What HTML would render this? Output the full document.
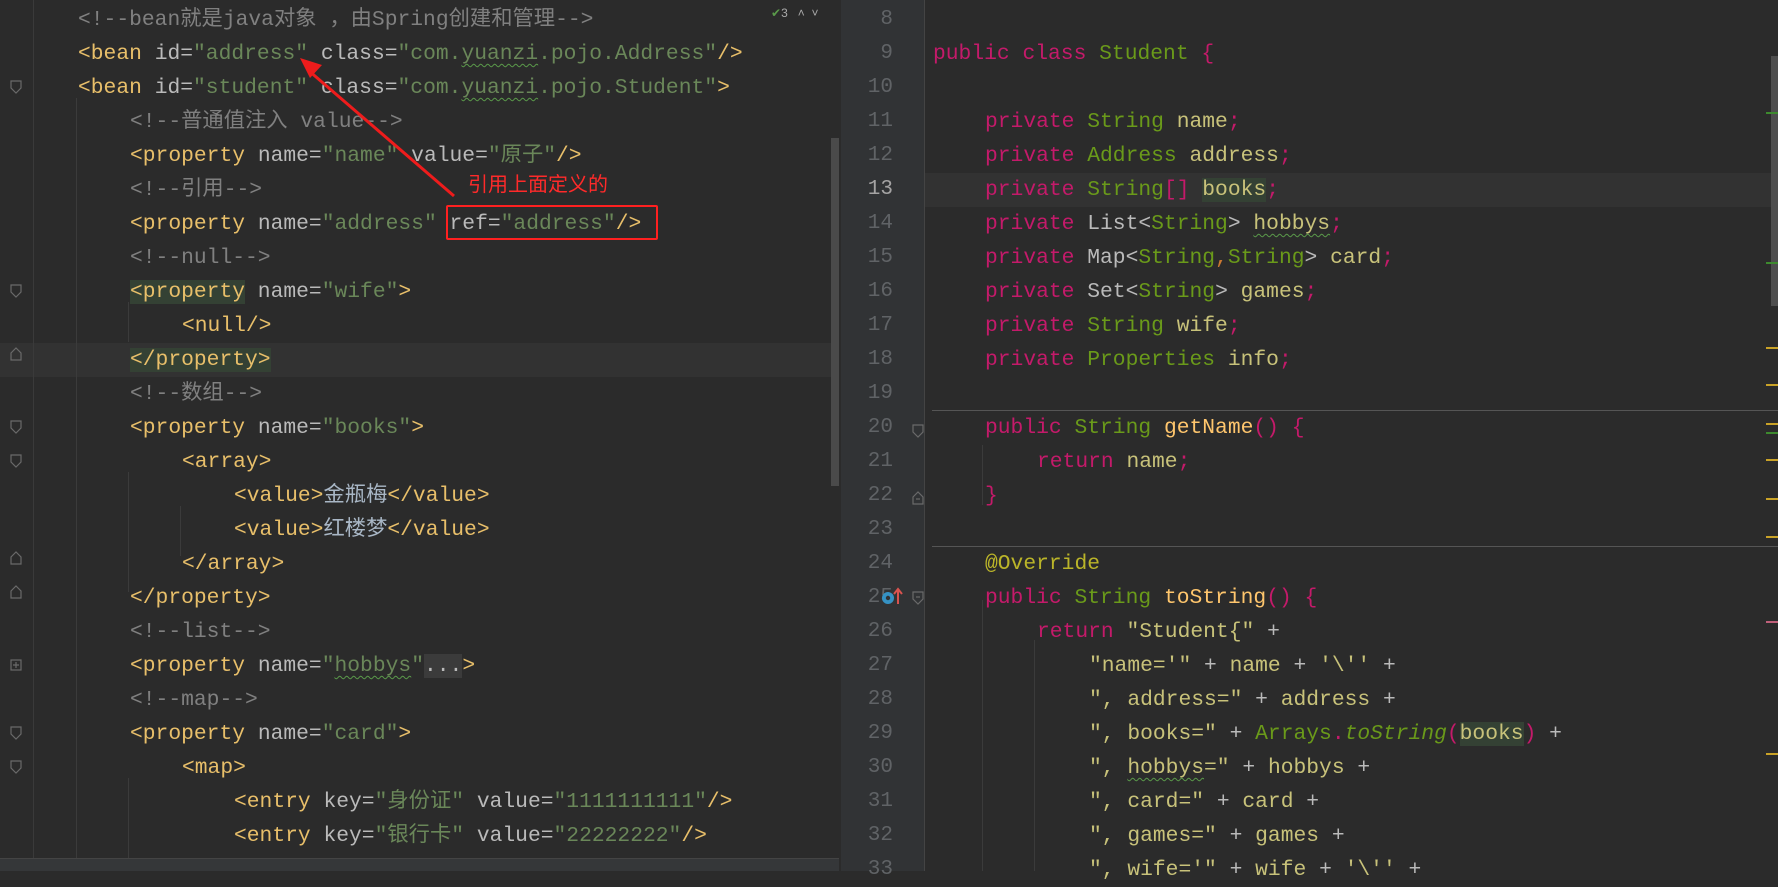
<!DOCTYPE html>
<html><head><meta charset="utf-8"><style>
*{margin:0;padding:0;box-sizing:border-box}
body{width:1778px;height:871px;background:#2b2b2b;position:relative;overflow:hidden;font-family:"Liberation Mono","Noto Sans CJK SC",monospace;font-size:21.3px}
.r{position:absolute;height:34px;line-height:34px;white-space:pre}
.t{color:#e8bf6a}.a{color:#bababa}.v{color:#6a8759}.c{color:#808080}.x{color:#a9b7c6}
.k{color:#c41a6a}.g{color:#6a9a1a}.i{color:#c8c27a}.m{color:#ffc66d}.s{color:#c8c27a}.an{color:#bbb529}
.ln{position:absolute;left:841px;width:52px;text-align:right;color:#606366;height:34px;line-height:34px;font-size:21px}
.hl{position:absolute;height:34px;background:#323232}
.sq{text-decoration:underline wavy #5a9a4a;text-decoration-thickness:1px;text-underline-offset:4px}
.gd{position:absolute;width:1px;background:#3b3b3b}
.mk{position:absolute;left:1766px;width:12px;height:2px}
</style></head><body>
<div class="hl" style="left:0;top:343px;width:831px"></div>
<div style="position:absolute;left:33px;top:0;width:1px;height:860px;background:#3a3a3a"></div>
<div class="gd" style="left:76px;top:98px;height:762px"></div>
<div class="gd" style="left:128px;top:302px;height:40px"></div>
<div class="gd" style="left:128px;top:472px;height:120px"></div>
<div class="gd" style="left:128px;top:778px;height:82px"></div>
<div class="gd" style="left:180px;top:506px;height:50px"></div>
<svg style="position:absolute;left:0;top:0" width="34" height="860">
<g fill="none" stroke="#6a6a6a" stroke-width="1.2">
<path d="M11 81h10v7l-5 5l-5-5z"/><path d="M11 285h10v7l-5 5l-5-5z"/><path d="M11 353l5-5l5 5v7h-10z"/>
<path d="M11 421h10v7l-5 5l-5-5z"/><path d="M11 455h10v7l-5 5l-5-5z"/>
<path d="M11 557l5-5l5 5v7h-10z"/><path d="M11 591l5-5l5 5v7h-10z"/>
<rect x="11" y="660" width="10" height="10"/><path d="M16 662v6M13 665h6"/>
<path d="M11 727h10v7l-5 5l-5-5z"/><path d="M11 761h10v7l-5 5l-5-5z"/>
</g></svg>
<div class="r" style="left:78px;top:3px"><span class="c">&lt;!--bean就是java对象 ，由Spring创建和管理--&gt;</span></div>
<div class="r" style="left:78px;top:37px"><span class="t">&lt;bean </span><span class="a">id=</span><span class="v">"address"</span><span class="a"> class=</span><span class="v">"com.<span class="sq">yuanzi</span>.pojo.Address"</span><span class="t">/&gt;</span></div>
<div class="r" style="left:78px;top:71px"><span class="t">&lt;bean </span><span class="a">id=</span><span class="v">"student"</span><span class="a"> class=</span><span class="v">"com.<span class="sq">yuanzi</span>.pojo.Student"</span><span class="t">&gt;</span></div>
<div class="r" style="left:130px;top:105px"><span class="c">&lt;!--普通值注入 value--&gt;</span></div>
<div class="r" style="left:130px;top:139px"><span class="t">&lt;property </span><span class="a">name=</span><span class="v">"name"</span><span class="a"> value=</span><span class="v">"原子"</span><span class="t">/&gt;</span></div>
<div class="r" style="left:130px;top:173px"><span class="c">&lt;!--引用--&gt;</span></div>
<div class="r" style="left:130px;top:207px"><span class="t">&lt;property </span><span class="a">name=</span><span class="v">"address"</span><span class="a"> ref=</span><span class="v">"address"</span><span class="t">/&gt;</span></div>
<div class="r" style="left:130px;top:241px"><span class="c">&lt;!--null--&gt;</span></div>
<div class="r" style="left:130px;top:275px"><span class="t" style="background:#344134">&lt;property</span><span class="a"> name=</span><span class="v">"wife"</span><span class="t">&gt;</span></div>
<div class="r" style="left:182px;top:309px"><span class="t">&lt;null/&gt;</span></div>
<div class="r" style="left:130px;top:343px"><span class="t" style="background:#344134">&lt;/property&gt;</span></div>
<div class="r" style="left:130px;top:377px"><span class="c">&lt;!--数组--&gt;</span></div>
<div class="r" style="left:130px;top:411px"><span class="t">&lt;property </span><span class="a">name=</span><span class="v">"books"</span><span class="t">&gt;</span></div>
<div class="r" style="left:182px;top:445px"><span class="t">&lt;array&gt;</span></div>
<div class="r" style="left:234px;top:479px"><span class="t">&lt;value&gt;</span><span class="x">金瓶梅</span><span class="t">&lt;/value&gt;</span></div>
<div class="r" style="left:234px;top:513px"><span class="t">&lt;value&gt;</span><span class="x">红楼梦</span><span class="t">&lt;/value&gt;</span></div>
<div class="r" style="left:182px;top:547px"><span class="t">&lt;/array&gt;</span></div>
<div class="r" style="left:130px;top:581px"><span class="t">&lt;/property&gt;</span></div>
<div class="r" style="left:130px;top:615px"><span class="c">&lt;!--list--&gt;</span></div>
<div class="r" style="left:130px;top:649px"><span class="t">&lt;property </span><span class="a">name=</span><span class="v">"<span class="sq">hobbys</span>"</span><span class="a" style="background:#3b3b3b">...</span><span class="t">&gt;</span></div>
<div class="r" style="left:130px;top:683px"><span class="c">&lt;!--map--&gt;</span></div>
<div class="r" style="left:130px;top:717px"><span class="t">&lt;property </span><span class="a">name=</span><span class="v">"card"</span><span class="t">&gt;</span></div>
<div class="r" style="left:182px;top:751px"><span class="t">&lt;map&gt;</span></div>
<div class="r" style="left:234px;top:785px"><span class="t">&lt;entry </span><span class="a">key=</span><span class="v">"身份证"</span><span class="a"> value=</span><span class="v">"1111111111"</span><span class="t">/&gt;</span></div>
<div class="r" style="left:234px;top:819px"><span class="t">&lt;entry </span><span class="a">key=</span><span class="v">"银行卡"</span><span class="a"> value=</span><span class="v">"22222222"</span><span class="t">/&gt;</span></div>
<div style="position:absolute;left:0;top:858px;width:839px;height:13px;background:#353739;border-top:1px solid #444"></div>
<div style="position:absolute;left:771px;top:6px;font:12px 'Liberation Sans',sans-serif;color:#aaa"><span style="color:#5a9a4a">✔</span>3 &nbsp;&nbsp;<span>&#x2C4;</span>&nbsp;&nbsp;<span>&#x2C5;</span></div>
<div style="position:absolute;left:831px;top:138px;width:8px;height:348px;background:#4a4a4a"></div>
<div style="position:absolute;left:446px;top:205px;width:212px;height:35px;border:2.5px solid #ff2020;border-radius:2px"></div>
<div style="position:absolute;left:468px;top:168px;font:20px 'Liberation Sans','Noto Sans CJK SC',sans-serif;color:#ff2a2a">引用上面定义的</div>
<svg style="position:absolute;left:0;top:0" width="839" height="300"><line x1="454" y1="196" x2="308" y2="70" stroke="#ee1c1c" stroke-width="3"/><path d="M300 58l22 7l-12 13z" fill="#ee1c1c"/></svg>
<div style="position:absolute;left:841px;top:0;width:83px;height:871px;background:#313335"></div>
<div style="position:absolute;left:924px;top:0;width:1px;height:871px;background:#444"></div>
<div class="hl" style="left:925px;top:173px;width:853px"></div>
<div style="position:absolute;left:932px;top:410px;width:846px;height:1px;background:#555"></div>
<div style="position:absolute;left:932px;top:546px;width:846px;height:1px;background:#555"></div>
<div class="ln" style="top:3px">8</div><div class="ln" style="top:37px">9</div><div class="ln" style="top:71px">10</div><div class="ln" style="top:105px">11</div><div class="ln" style="top:139px">12</div><div class="ln" style="top:173px;color:#a4a3a3">13</div><div class="ln" style="top:207px">14</div><div class="ln" style="top:241px">15</div><div class="ln" style="top:275px">16</div><div class="ln" style="top:309px">17</div><div class="ln" style="top:343px">18</div><div class="ln" style="top:377px">19</div><div class="ln" style="top:411px">20</div><div class="ln" style="top:445px">21</div><div class="ln" style="top:479px">22</div><div class="ln" style="top:513px">23</div><div class="ln" style="top:547px">24</div><div class="ln" style="top:581px">25</div><div class="ln" style="top:615px">26</div><div class="ln" style="top:649px">27</div><div class="ln" style="top:683px">28</div><div class="ln" style="top:717px">29</div><div class="ln" style="top:751px">30</div><div class="ln" style="top:785px">31</div><div class="ln" style="top:819px">32</div><div class="ln" style="top:853px">33</div>
<svg style="position:absolute;left:841px;top:0" width="84" height="871"><g fill="none" stroke="#6a6a6a" stroke-width="1.2"><path d="M72 425h10v7l-5 5l-5-5z"/><path d="M72 497l5-5l5 5v7h-10z"/><path d="M72 592h10v7l-5 5l-5-5z"/><path d="M75 597h4"/><path d="M75 499h4"/></g>
<circle cx="47" cy="598" r="6" fill="#3592c4"/><circle cx="47" cy="598" r="2.2" fill="#313335"/><path d="M57 604v-14M53 594l4-5l4 5" stroke="#d9534f" stroke-width="2" fill="none"/></svg>
<div class="gd" style="left:982px;top:445px;height:60px"></div>
<div class="gd" style="left:982px;top:600px;height:271px"></div>
<div class="gd" style="left:1034px;top:640px;height:231px"></div>
<div class="r" style="left:933px;top:37px"><span class="k">public class </span><span class="g">Student </span><span class="k">{</span></div>
<div class="r" style="left:985px;top:105px"><span class="k">private </span><span class="g">String </span><span class="i">name</span><span class="k">;</span></div>
<div class="r" style="left:985px;top:139px"><span class="k">private </span><span class="g">Address </span><span class="i">address</span><span class="k">;</span></div>
<div class="r" style="left:985px;top:173px"><span class="k">private </span><span class="g">String</span><span class="k">[] </span><span class="i" style="background:#344134">books</span><span class="k">;</span></div>
<div class="r" style="left:985px;top:207px"><span class="k">private </span><span class="a">List&lt;</span><span class="g">String</span><span class="a">&gt; </span><span class="i sq">hobbys</span><span class="k">;</span></div>
<div class="r" style="left:985px;top:241px"><span class="k">private </span><span class="a">Map&lt;</span><span class="g">String</span><span style="color:#cc7832">,</span><span class="g">String</span><span class="a">&gt; </span><span class="i">card</span><span class="k">;</span></div>
<div class="r" style="left:985px;top:275px"><span class="k">private </span><span class="a">Set&lt;</span><span class="g">String</span><span class="a">&gt; </span><span class="i">games</span><span class="k">;</span></div>
<div class="r" style="left:985px;top:309px"><span class="k">private </span><span class="g">String </span><span class="i">wife</span><span class="k">;</span></div>
<div class="r" style="left:985px;top:343px"><span class="k">private </span><span class="g">Properties </span><span class="i">info</span><span class="k">;</span></div>
<div class="r" style="left:985px;top:411px"><span class="k">public </span><span class="g">String </span><span class="m">getName</span><span class="k">() {</span></div>
<div class="r" style="left:1037px;top:445px"><span class="k">return </span><span class="i">name</span><span class="k">;</span></div>
<div class="r" style="left:985px;top:479px"><span class="k">}</span></div>
<div class="r" style="left:985px;top:547px"><span class="an">@Override</span></div>
<div class="r" style="left:985px;top:581px"><span class="k">public </span><span class="g">String </span><span class="m">toString</span><span class="k">() {</span></div>
<div class="r" style="left:1037px;top:615px"><span class="k">return </span><span class="s">"Student{" </span><span class="a">+</span></div>
<div class="r" style="left:1089px;top:649px"><span class="s">"name='" </span><span class="a">+ </span><span class="i">name </span><span class="a">+ </span><span class="s">'\'' </span><span class="a">+</span></div>
<div class="r" style="left:1089px;top:683px"><span class="s">", address=" </span><span class="a">+ </span><span class="i">address </span><span class="a">+</span></div>
<div class="r" style="left:1089px;top:717px"><span class="s">", books=" </span><span class="a">+ </span><span class="g">Arrays</span><span class="k">.</span><span class="g" style="font-style:italic">toString</span><span class="k">(</span><span class="i" style="background:#344134">books</span><span class="k">) </span><span class="a">+</span></div>
<div class="r" style="left:1089px;top:751px"><span class="s">", <span class="sq">hobbys</span>=" </span><span class="a">+ </span><span class="i">hobbys </span><span class="a">+</span></div>
<div class="r" style="left:1089px;top:785px"><span class="s">", card=" </span><span class="a">+ </span><span class="i">card </span><span class="a">+</span></div>
<div class="r" style="left:1089px;top:819px"><span class="s">", games=" </span><span class="a">+ </span><span class="i">games </span><span class="a">+</span></div>
<div class="r" style="left:1089px;top:853px"><span class="s">", wife='" </span><span class="a">+ </span><span class="i">wife </span><span class="a">+ </span><span class="s">'\'' </span><span class="a">+</span></div>
<div style="position:absolute;left:1771px;top:56px;width:7px;height:250px;background:#4e4e4e"></div>
<div class="mk" style="top:112px;background:#3d8a2e"></div><div class="mk" style="top:262px;background:#3d8a2e"></div><div class="mk" style="top:432px;background:#3d8a2e"></div>
<div class="mk" style="top:347px;background:#c9a227"></div><div class="mk" style="top:384px;background:#c9a227"></div><div class="mk" style="top:423px;background:#c9a227"></div><div class="mk" style="top:459px;background:#c9a227"></div><div class="mk" style="top:498px;background:#c9a227"></div><div class="mk" style="top:536px;background:#c9a227"></div>
<div class="mk" style="top:621px;background:#c0607a"></div><div class="mk" style="top:753px;background:#c9a227"></div>
</body></html>
